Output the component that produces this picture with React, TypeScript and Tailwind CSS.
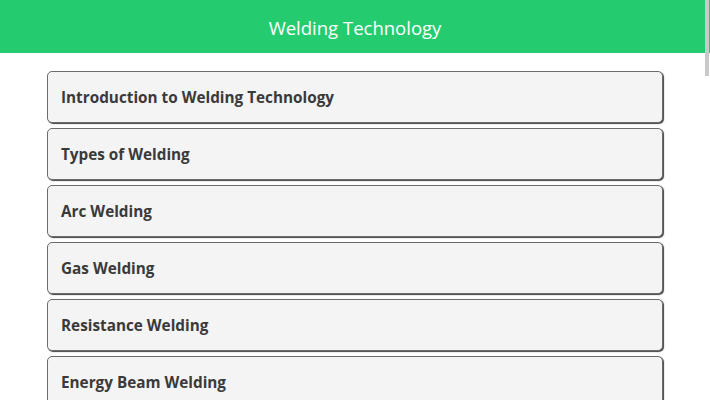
const topics = [
  "Introduction to Welding Technology",
  "Types of Welding",
  "Arc Welding",
  "Gas Welding",
  "Resistance Welding",
  "Energy Beam Welding",
];

export default function App() {
  return (
    <div
      className="relative h-[400px] w-[710px] overflow-hidden bg-white"
      style={{ fontFamily: "'Open Sans', sans-serif" }}
    >
      <header className="flex h-[53px] items-center justify-center bg-[#24cc6f] pt-[2px]">
        <h1 className="text-[18.5px] font-normal text-white">Welding Technology</h1>
      </header>

      <div className="mx-auto mt-[18px] flex w-[616px] flex-col gap-[5px]">
        {topics.map((t) => (
          <div
            key={t}
            className="flex h-[52px] shrink-0 items-center rounded-[5px] border border-[#6b6b6b] bg-[#f4f4f4] px-[13px] shadow-[1px_1px_1px_#444]"
          >
            <span className="text-[15.3px] font-bold text-[#3a3a3a]">{t}</span>
          </div>
        ))}
      </div>

      <div className="absolute right-[1px] top-0 h-[76px] w-[4px] bg-[#c9c9c9]" />
    </div>
  );
}
